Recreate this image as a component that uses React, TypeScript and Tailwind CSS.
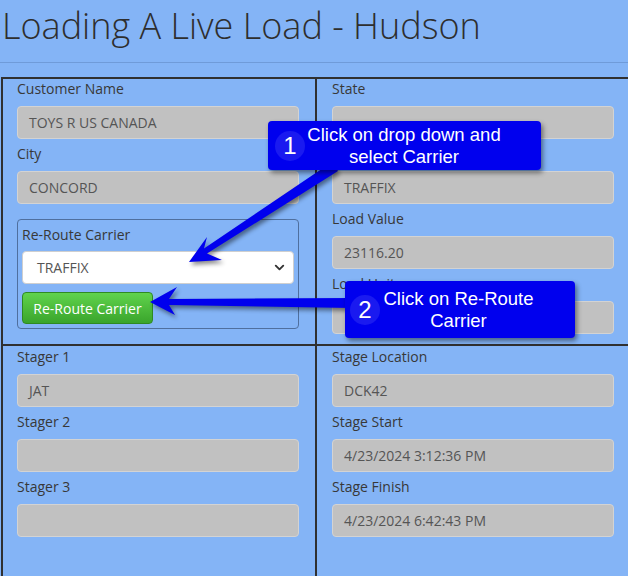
import { ChevronDown } from "lucide-react";

type Field = { label: string; value: string };

const leftTop: Field[] = [
  { label: "Customer Name", value: "TOYS R US CANADA" },
  { label: "City", value: "CONCORD" },
];

const rightTop: Field[] = [
  { label: "State", value: "" },
  { label: "Carrier", value: "TRAFFIX" },
  { label: "Load Value", value: "23116.20" },
  { label: "Load Unit", value: "" },
];

const leftBottom: Field[] = [
  { label: "Stager 1", value: "JAT" },
  { label: "Stager 2", value: "" },
  { label: "Stager 3", value: "" },
];

const rightBottom: Field[] = [
  { label: "Stage Location", value: "DCK42" },
  { label: "Stage Start", value: "4/23/2024 3:12:36 PM" },
  { label: "Stage Finish", value: "4/23/2024 6:42:43 PM" },
];

const FieldRow = ({ label, value }: Field) => (
  <div className="mb-[5px]">
    <div className="text-[14px] leading-[19px] text-[#383838] mb-[8px]">{label}</div>
    <div className="h-[33px] rounded-[4px] border border-[#d3d3d3] bg-[#c1c1c1] pl-[11px] flex items-center text-[14px] text-[#555]">
      {value}
    </div>
  </div>
);

const Callout = ({
  num,
  lines,
  className,
}: {
  num: string;
  lines: string[];
  className: string;
}) => (
  <div
    className={`absolute flex items-center rounded-[4px] bg-[#0000ee] shadow-[2px_3px_5px_rgba(0,0,0,0.45)] font-['Liberation_Sans',Arial,sans-serif] text-white ${className}`}
  >
    <div className="w-[30px] h-[30px] shrink-0 rounded-full bg-white/10 flex items-center justify-center text-[24px]">
      {num}
    </div>
    <div className="flex-1 pr-[38px] flex flex-col items-center text-[18.5px] leading-[22px] whitespace-nowrap">
      {lines.map((l) => (
        <div key={l}>{l}</div>
      ))}
    </div>
  </div>
);

export default function App() {
  return (
    <div className="relative w-[628px] h-[576px] overflow-hidden bg-[#84b4f6] font-['Open_Sans',sans-serif]">
      <h1 className="pl-[2px] pt-[2px] text-[36px] leading-[48px] font-light text-[#2e2e2e] whitespace-nowrap">
        Loading A Live Load - Hudson
      </h1>
      <hr className="mt-[12px] border-0 border-t border-[#6f9bd9]" />

      <div className="mt-[14px] ml-[1px] w-[631px] grid grid-cols-[314px_315px] border-l-2 border-t-2 border-[#303030]">
        <div className="border-r-2 border-b-2 border-[#303030] pl-[14px] pr-[16px] pb-[15px]">
          {leftTop.map((f) => (
            <FieldRow key={f.label} {...f} />
          ))}
          <div className="mt-[15px] h-[110px] rounded-[4px] border border-[#4f6f9e] px-[4px] pt-[5px]">
            <div className="text-[14px] leading-[19px] text-[#383838] mb-[7px]">Re-Route Carrier</div>
            <div className="h-[33px] rounded-[4px] border border-[#cfcfcf] bg-white pl-[14px] pr-[6px] flex items-center justify-between text-[14px] text-[#555]">
              <span>TRAFFIX</span>
              <ChevronDown size={15} strokeWidth={3} className="text-[#333]" />
            </div>
            <button className="mt-[8px] w-[131px] h-[32px] rounded-[4px] border border-[#2f8a22] bg-gradient-to-b from-[#60d34c] to-[#3aa52c] text-white text-[14px]">
              Re-Route Carrier
            </button>
          </div>
        </div>
        <div className="border-r-2 border-b-2 border-[#303030] pl-[15px] pr-[16px] pb-[5px]">
          {rightTop.map((f) => (
            <FieldRow key={f.label} {...f} />
          ))}
        </div>
        <div className="border-r-2 border-b-2 border-[#303030] pl-[14px] pr-[16px] pt-[1px] pb-[60px]">
          {leftBottom.map((f) => (
            <FieldRow key={f.label} {...f} />
          ))}
        </div>
        <div className="border-r-2 border-b-2 border-[#303030] pl-[15px] pr-[16px] pt-[1px] pb-[60px]">
          {rightBottom.map((f) => (
            <FieldRow key={f.label} {...f} />
          ))}
        </div>
      </div>

      {/* annotation arrows */}
      <svg
        className="absolute inset-0 pointer-events-none drop-shadow-[2px_3px_2px_rgba(0,0,0,0.45)]"
        width="628"
        height="576"
        viewBox="0 0 628 576"
      >
        <polygon
          points="189,262 207,237 204,248.6 332,162 338,171 207,253.6 222,260"
          fill="#0000ee"
        />
        <polygon
          points="150,302 177,287 169,299 352,298 352,308 169,305 175,315"
          fill="#0000ee"
        />
      </svg>

      <Callout
        num="1"
        lines={["Click on drop down and", "select Carrier"]}
        className="left-[268px] top-[121px] w-[273px] h-[49px] pl-[7px]"
      />
      <Callout
        num="2"
        lines={["Click on Re-Route", "Carrier"]}
        className="left-[345px] top-[281px] w-[230px] h-[57px] pl-[5px]"
      />
    </div>
  );
}
